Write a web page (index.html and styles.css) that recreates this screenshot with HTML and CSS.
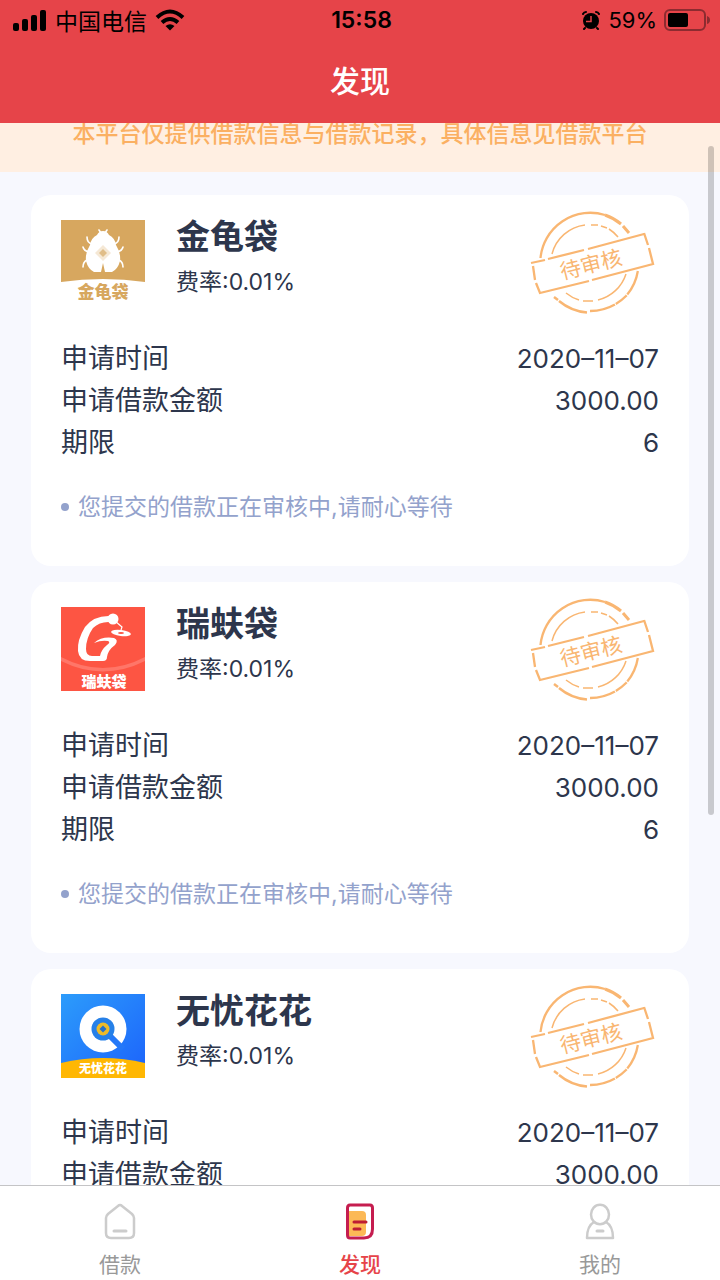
FILE: index.html
```html
<!DOCTYPE html>
<html lang="zh-CN">
<head>
<meta charset="utf-8">
<meta name="viewport" content="width=device-width, initial-scale=1">
<title>发现</title>
<link rel="stylesheet" href="styles.css">
</head>
<body class="app">
<svg class="defs" width="0" height="0" aria-hidden="true">
  <symbol id="stamp" viewBox="10 10 125 105">
    <g fill="none" stroke="#f9b672" stroke-width="2.300">
      <path d="M20.500 57A50 50 0 0 1 85 14" />
      <path d="M85 14A50 50 0 0 1 101 23M103 25L109 32" stroke-width="3" />
      <path d="M34 96L38 99M39 100A50 50 0 0 0 67 111.500" stroke-width="2.500" />
      <path d="M70 110A50 50 0 0 0 106 95A50 50 0 0 0 118 69" stroke-dasharray="26 1 14 1" />
      <path d="M32 53A39 39 0 0 1 65 24M71 24L78 24M81 25L87 27M89 28A39 39 0 0 1 98 36" stroke-width="1.500" />
      <path d="M46 92A39 39 0 0 0 59 99M63 100L73 100M78 99A39 39 0 0 0 106 73" stroke-width="1.500" />
      <path d="M11 62L25 59M28 58L64 49M68 48L124 33M13 65L15 79M16 82L20 92L69 80M72 79L133 63L129 47M128 44L124 32" />
    </g>
    <text class="stamp-text" x="71" y="71" transform="rotate(-14 71 64)">待审核</text>
  </symbol>
</svg>

<header class="header">
  <div class="status">
    <div class="status-side">
      <svg width="34" height="21" viewBox="0 0 34 21" aria-hidden="true"><rect x="0" y="13" width="6" height="8" rx="2"/><rect x="9" y="9" width="6" height="12" rx="2"/><rect x="18" y="5" width="6" height="16" rx="2"/><rect x="27" y="0" width="6" height="21" rx="2"/></svg>
      <span>中国电信</span>
      <svg width="30" height="22" viewBox="0 0 30 22" aria-hidden="true"><g fill="none" stroke="#000" stroke-width="4"><path d="M2 8.500Q15-3.500 28 8.500"/><path d="M7 13.500Q15 6.500 23 13.500"/></g><path d="M10.500 17Q15 13.500 19.500 17L15 21.500Z"/></svg>
    </div>
    <span class="clock">15:58</span>
    <div class="status-side status-end">
      <svg width="20" height="20" viewBox="0 0 20 20" aria-hidden="true"><circle cx="10" cy="11" r="8"/><path d="M2 4Q3 2 5 2M18 4Q17 2 15 2M4 18L3 19M16 18L17 19" fill="none" stroke="#000" stroke-width="2" stroke-linecap="round"/><path d="M10 6V11.500H5" fill="none" stroke="#e64449" stroke-width="1.500"/></svg>
      <span class="charge">59%</span>
      <svg width="46" height="22" viewBox="0 0 46 22" aria-hidden="true"><rect x="1" y="1" width="40" height="20" rx="5" fill="none" stroke="#8c2b30" stroke-width="2"/><rect x="4" y="4" width="20" height="14" rx="2"/><path d="M43 7Q46 8 46 11Q46 14 43 15Z" fill="#8c2b30"/></svg>
    </div>
  </div>
  <h1 class="title">发现</h1>
</header>

<main class="content">
  <p class="notice">本平台仅提供借款信息与借款记录，具体信息见借款平台</p>
  <div class="cards">
    <article class="card">
      <div class="card-head">
        <svg class="logo" viewBox="0 0 84 84" aria-hidden="true">
          <path d="M0 0H84V62Q42 56 0 62Z" fill="#d7a75f"/>
          <g fill="none" stroke="#fff" stroke-width="1.600" stroke-linecap="round"><path d="M31 24Q26 23 26 17M53 24Q58 23 58 17M28 32Q23 31 22 27M56 32Q61 31 62 27M26 40Q22 42 22 47M58 40Q62 42 62 47M40 13L38 10M44 13L46 10"/></g>
          <path d="M42 11Q46 11 48 15Q54 18 55 25Q60 33 59 41Q57 49 51 52H44L42 43L40 52H33Q27 49 25 41Q24 33 29 25Q30 18 36 15Q38 11 42 11Z" fill="#fff"/>
          <path d="M42 25L50 33L42 41L34 33Z" fill="#f5e8d5"/><path d="M42 29L46 33L42 37L38 33Z" fill="#e0bd88"/>
          <text class="logo-text logo-text-gold" x="42" y="78">金龟袋</text>
        </svg>
        <div class="lender"><h2 class="name">金龟袋</h2><p class="rate">费率:0.01%</p></div>
        <svg class="stamp" role="img" aria-label="待审核"><use href="#stamp"/></svg>
      </div>
      <dl class="facts">
        <div class="fact"><dt>申请时间</dt><dd>2020–11–07</dd></div>
        <div class="fact"><dt>申请借款金额</dt><dd>3000.00</dd></div>
        <div class="fact"><dt>期限</dt><dd>6</dd></div>
      </dl>
      <p class="message">您提交的借款正在审核中,请耐心等待</p>
    </article>

    <article class="card">
      <div class="card-head">
        <svg class="logo" viewBox="0 0 84 84" aria-hidden="true">
          <rect width="84" height="84" fill="#fd5543"/>
          <path d="M0 50Q42 72 84 50V54Q42 75 0 54Z" fill="#ff7668"/>
          <circle cx="52" cy="12" r="5.500" fill="#fff"/>
          <path d="M50 9Q33 8 24 20Q16 33 17 44Q18 54 29 54H42Q46 54 46 50Q47 43 54 38Q58 33 53 31Q41 29 33 36Q40 33 47 34Q50 35 46 38Q40 43 39 49H31Q25 49 25 42Q25 31 32 21Q39 14 50 15Z" fill="#fff"/>
          <path d="M54 14L61 20L60 23" fill="none" stroke="#fff" stroke-width="1.200"/>
          <ellipse cx="60" cy="26" rx="10" ry="3" transform="rotate(7 60 26)" fill="#fff"/><ellipse cx="60" cy="26" rx="3" ry="1" fill="#fd5543"/>
          <text class="logo-text" x="43" y="80">瑞蚨袋</text>
        </svg>
        <div class="lender"><h2 class="name">瑞蚨袋</h2><p class="rate">费率:0.01%</p></div>
        <svg class="stamp" role="img" aria-label="待审核"><use href="#stamp"/></svg>
      </div>
      <dl class="facts">
        <div class="fact"><dt>申请时间</dt><dd>2020–11–07</dd></div>
        <div class="fact"><dt>申请借款金额</dt><dd>3000.00</dd></div>
        <div class="fact"><dt>期限</dt><dd>6</dd></div>
      </dl>
      <p class="message">您提交的借款正在审核中,请耐心等待</p>
    </article>

    <article class="card">
      <div class="card-head">
        <svg class="logo" viewBox="0 0 84 84" aria-hidden="true">
          <defs><linearGradient id="sky" x1="0" y1="0" x2="1" y2="1"><stop offset="0" stop-color="#2c9cfb"/><stop offset="1" stop-color="#1c62fb"/></linearGradient></defs>
          <rect width="84" height="84" fill="url(#sky)"/>
          <path d="M0 69Q42 59 84 69V84H0Z" fill="#ffb703"/>
          <circle cx="42" cy="35" r="23.500" fill="#fff"/>
          <path d="M45 38L62 55" stroke="#2478f8" stroke-width="6"/>
          <circle cx="42" cy="35" r="11.500" fill="#2680e8"/><circle cx="42" cy="35" r="6.500" fill="#eebb28"/><path d="M42 31.500L45.500 35L42 38.500L38.500 35Z" fill="#2671c8"/>
          <text class="logo-text logo-text-small" x="42" y="79">无忧花花</text>
        </svg>
        <div class="lender"><h2 class="name">无忧花花</h2><p class="rate">费率:0.01%</p></div>
        <svg class="stamp" role="img" aria-label="待审核"><use href="#stamp"/></svg>
      </div>
      <dl class="facts">
        <div class="fact"><dt>申请时间</dt><dd>2020–11–07</dd></div>
        <div class="fact"><dt>申请借款金额</dt><dd>3000.00</dd></div>
      </dl>
    </article>
  </div>
  <div class="scroll-thumb"></div>
</main>

<nav class="tabs">
  <a class="tab" href="#loan">
    <svg width="36" height="38" viewBox="0 0 36 38" fill="none" stroke="#ccc" stroke-width="2.500" stroke-linejoin="round" aria-hidden="true"><path d="M18 3Q19 3 20 4L30 12Q32 14 32 16V31Q32 36 27 36H9Q4 36 4 31V16Q4 14 6 12L16 4Q17 3 18 3Z"/><path d="M12 29H24" stroke-width="3" stroke-linecap="round"/></svg>
    <span>借款</span>
  </a>
  <a class="tab tab-active" href="#discover" aria-current="page">
    <svg width="36" height="38" viewBox="0 0 36 38" fill="none" aria-hidden="true"><path d="M6 9H20Q24 9 24 13V30Q24 34 20 34H6Z" fill="#fcb956"/><path d="M8 3H28Q30.500 3 30.500 6V27Q30.500 36 22 36H8Q5.500 36 5.500 33V6Q5.500 3 8 3Z" stroke="#c51d4f" stroke-width="3"/><path d="M12 20H24M12 27H18" stroke="#bd1d34" stroke-width="3" stroke-linecap="round"/></svg>
    <span>发现</span>
  </a>
  <a class="tab" href="#mine">
    <svg width="36" height="38" viewBox="0 0 36 38" fill="none" stroke="#ccc" stroke-width="2.500" stroke-linejoin="round" aria-hidden="true"><ellipse cx="18" cy="12.500" rx="9" ry="9.800"/><path d="M12 20Q5 24 5 36H31Q31 24 24 20"/><path d="M15 29H21" stroke-width="3" stroke-linecap="round"/></svg>
    <span>我的</span>
  </a>
</nav>
</body>
</html>
```

FILE: styles.css
```css
* {
  box-sizing: border-box;
}

.app {
  margin: 0;
  height: 100vh;
  display: flex;
  flex-direction: column;
  background: #f7f8fe;
  color: #2d364c;
  font-family: Inter, "Noto Sans CJK SC", sans-serif;
}

h1, h2, p, dl, dd {
  margin: 0;
}

.defs {
  position: absolute;
}

.header {
  background: #e64449;
  padding-bottom: 19px;
}

.status {
  display: grid;
  grid-template-columns: 1fr auto 1fr;
  align-items: center;
  height: 40px;
  padding: 0 10px 0 13px;
  color: #000;
  font-size: 23px;
}

.status-side {
  display: flex;
  align-items: center;
  gap: 8px;
}

.status-end {
  justify-content: flex-end;
  gap: 7px;
}

.charge {
  font-size: 22px;
}

.clock {
  font-weight: 600;
}

.title {
  padding-top: 18px;
  color: #fff;
  font-size: 30px;
  line-height: 46px;
  font-weight: 500;
  text-align: center;
}

.content {
  position: relative;
  flex: 1;
  min-height: 0;
  overflow: hidden;
}

.notice {
  padding-bottom: 27px;
  background: #ffefe2;
  color: #fbb062;
  font-size: 23px;
  line-height: 22px;
  font-weight: 500;
  text-align: center;
}

.cards {
  display: flex;
  flex-direction: column;
  gap: 16px;
  padding: 23px 31px;
}

.card {
  padding: 16px 30px 42px;
  border-radius: 20px;
  background: #fff;
}

.card-head {
  display: flex;
  align-items: flex-start;
}

.logo {
  width: 84px;
  height: 84px;
  margin: 9px 31px 0 0;
}

.logo-text {
  fill: #fff;
  font-size: 15px;
  font-weight: 900;
  text-anchor: middle;
}

.logo-text-gold {
  fill: #d7a75f;
  font-size: 17px;
}

.logo-text-small {
  font-size: 12px;
}

.lender {
  flex: 1;
  padding-top: 9px;
}

.name {
  font-size: 34px;
  line-height: 34px;
  font-weight: 700;
}

.rate {
  margin-top: 16px;
  font-size: 23px;
  line-height: 24px;
}

.stamp {
  width: 125px;
  height: 105px;
  margin-right: 4px;
}

.stamp-text {
  fill: #f9b672;
  font-size: 21px;
  text-anchor: middle;
}

.facts {
  padding-top: 22px;
  font-size: 26px;
  line-height: 42px;
}

.fact {
  display: flex;
  justify-content: space-between;
  height: 42px;
}

.fact dt {
  font-size: 27px;
}

.message {
  display: flex;
  align-items: center;
  gap: 9px;
  padding-top: 26px;
  color: #93a2cc;
  font-size: 23px;
  line-height: 34px;
}

.message::before {
  content: "";
  width: 8px;
  height: 8px;
  border-radius: 50%;
  background: #93a2cc;
}

.scroll-thumb {
  position: absolute;
  top: 23px;
  right: 6px;
  width: 6px;
  height: 63%;
  border-radius: 3px;
  background: rgba(0, 0, 0, 0.19);
}

.tabs {
  display: grid;
  grid-template-columns: repeat(3, 1fr);
  border-top: 1px solid #c4c4c6;
  background: #fff;
}

.tab {
  display: flex;
  flex-direction: column;
  align-items: center;
  gap: 10px;
  padding: 16px 0 0;
  color: #999;
  font-size: 21px;
  line-height: 30px;
  text-decoration: none;
}

.tab-active {
  color: #e64449;
  font-weight: 500;
}
```
